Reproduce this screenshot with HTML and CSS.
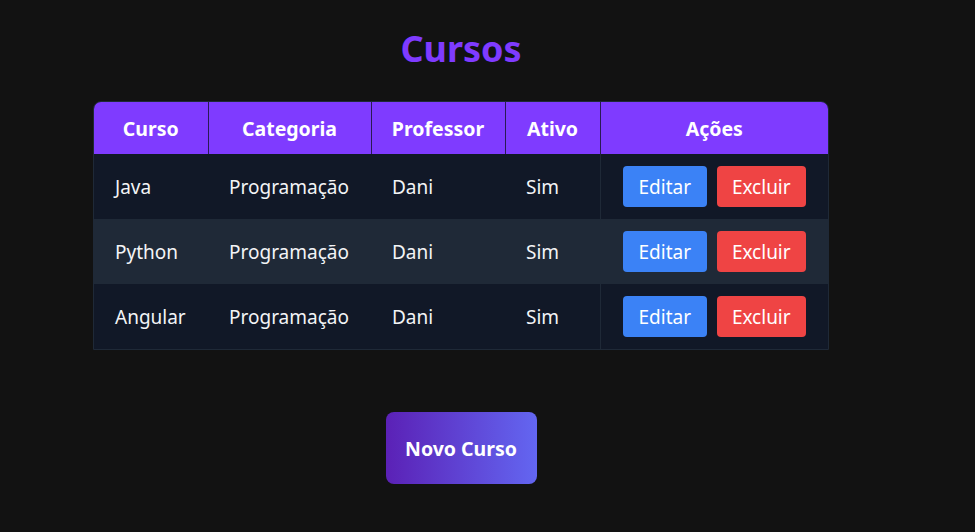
FILE: index.html
```html
<!DOCTYPE html>
<html lang="pt-BR">
<head>
<meta charset="utf-8">
<title>Cursos</title>
<link rel="stylesheet" href="styles.css">
</head>
<body>
<main class="page">
  <h1 class="title">Cursos</h1>
  <div class="table-wrap">
    <table class="courses">
      <colgroup>
        <col class="c-curso"><col class="c-cat"><col class="c-prof"><col class="c-ativo"><col class="c-acoes">
      </colgroup>
      <thead>
        <tr><th>Curso</th><th>Categoria</th><th>Professor</th><th>Ativo</th><th>Ações</th></tr>
      </thead>
      <tbody>
        <tr>
          <td>Java</td><td>Programação</td><td>Dani</td><td>Sim</td>
          <td class="actions"><div class="btns"><button class="btn edit">Editar</button><button class="btn del">Excluir</button></div></td>
        </tr>
        <tr>
          <td>Python</td><td>Programação</td><td>Dani</td><td>Sim</td>
          <td class="actions"><div class="btns"><button class="btn edit">Editar</button><button class="btn del">Excluir</button></div></td>
        </tr>
        <tr>
          <td>Angular</td><td>Programação</td><td>Dani</td><td>Sim</td>
          <td class="actions"><div class="btns"><button class="btn edit">Editar</button><button class="btn del">Excluir</button></div></td>
        </tr>
      </tbody>
    </table>
  </div>
  <button class="new-btn">Novo Curso</button>
</main>
</body>
</html>
```
FILE: styles.css
```css
* { box-sizing: border-box; }
html, body {
  margin: 0;
  background: #121212;
  font-family: "Noto Sans", "Open Sans", sans-serif;
  color: #f3f4f6;
}
.page {
  width: 922px;
  display: flex;
  flex-direction: column;
  align-items: center;
  padding-top: 24px;
}
.title {
  margin: 0;
  font-size: 36px;
  line-height: 50px;
  font-weight: 700;
  color: #7f3bff;
}
.table-wrap {
  margin-top: 27px;
  width: 736px;
  border-radius: 8px 8px 0 0;
  overflow: hidden;
  border: 1px solid #1f2937;
}
.courses {
  width: 100%;
  border-collapse: collapse;
  table-layout: fixed;
  font-size: 19px;
}
.c-curso { width: 114px; }
.c-cat { width: 163px; }
.c-prof { width: 134px; }
.c-ativo { width: 95px; }
.c-acoes { width: 228px; }
.courses th {
  background: #7f3bff;
  color: #fff;
  font-weight: 700;
  font-size: 19.5px;
  height: 52px;
  padding: 0 4px;
  text-align: center;
  border-left: 1px solid #2a1a55;
}
.courses th:first-child { border-left: none; }
.courses td {
  height: 65px;
  padding: 1px 21px 0;
  text-align: left;
  color: #f3f4f6;
}
.courses tbody tr:nth-child(odd) { background: #111827; }
.courses tbody tr:nth-child(even) { background: #1f2937; }
.courses td.actions {
  border-left: 1px solid #1f2937;
  padding: 0;
}
.btns {
  display: flex;
  justify-content: center;
  gap: 10px;
}
.btn {
  font-family: inherit;
  font-size: 19px;
  color: #fff;
  border: none;
  border-radius: 4px;
  height: 41px;
  padding: 0 15px;
  cursor: pointer;
}
.edit { background: #3b82f6; width: 84px; padding: 0; }
.del { background: #ef4444; width: 89px; padding: 0; }
.new-btn {
  margin-top: 62px;
  width: 151px;
  height: 72px;
  border: none;
  border-radius: 8px;
  background: linear-gradient(90deg, #5b21b6, #6366f1);
  color: #fff;
  font-family: inherit;
  font-size: 19.5px;
  font-weight: 700;
  cursor: pointer;
}
```
